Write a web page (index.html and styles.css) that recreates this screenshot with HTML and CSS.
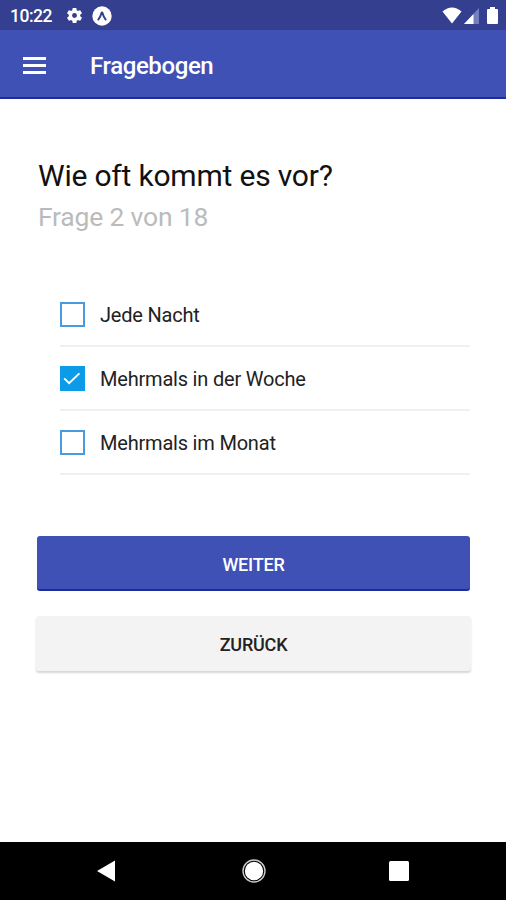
FILE: index.html
```html
<!DOCTYPE html>
<html lang="de">
<head>
    <meta charset="UTF-8">
    <meta name="viewport" content="width=device-width, initial-scale=1.0">
    <title>Fragebogen</title>
    <link rel="stylesheet" href="styles.css">
</head>
<body>
    <div class="status-bar">
        <span class="clock">10:22</span>
        <svg class="gear" width="19" height="19" viewBox="0 0 24 24" fill="#fff"><path d="M19.14 12.94c.04-.3.06-.61.06-.94s-.02-.64-.07-.94l2.03-1.58a.5.5 0 0 0 .12-.61l-1.92-3.32a.5.5 0 0 0-.59-.22l-2.39.96a7 7 0 0 0-1.62-.94l-.36-2.54a.5.5 0 0 0-.48-.41h-3.84a.5.5 0 0 0-.47.41l-.36 2.54c-.59.24-1.13.57-1.62.94l-2.39-.96a.5.5 0 0 0-.59.22L2.74 8.87a.5.5 0 0 0 .12.61l2.03 1.58a6 6 0 0 0 0 1.88l-2.03 1.58a.5.5 0 0 0-.12.61l1.92 3.32c.12.22.37.29.59.22l2.39-.96c.5.38 1.03.7 1.62.94l.36 2.54c.05.24.24.41.48.41h3.84c.24 0 .44-.17.47-.41l.36-2.54a7 7 0 0 0 1.62-.94l2.39.96c.22.08.47 0 .59-.22l1.92-3.32a.5.5 0 0 0-.12-.61zM12 15.1a3.1 3.1 0 1 1 0-6.2 3.1 3.1 0 0 1 0 6.2z"/></svg>
        <svg class="expo" width="20" height="20" viewBox="0 0 20 20"><circle cx="10" cy="10" r="9.7" fill="#fff"/><path d="M6.3 13.6Q8.6 10.6 9.4 7.2Q10 5.8 10.6 7.2Q11.4 10.6 13.7 13.6" fill="none" stroke="#303f8f" stroke-width="1.9" stroke-linecap="round" stroke-linejoin="round"/></svg>
        <div class="status-right">
            <svg width="20" height="17" viewBox="0 0 20 17"><path d="M0.5 4.5Q10-3.5 19.5 4.5L10 16.5z" fill="#fff"/></svg>
            <svg width="15" height="16" viewBox="0 0 15 16"><path d="M15 0v16H0z" fill="#7480bd"/><path d="M9.5 5.9V16H0z" fill="#fff"/></svg>
            <svg class="battery" width="11" height="17" viewBox="0 0 11 17"><path d="M3 0h5v2h2a1 1 0 0 1 1 1v13a1 1 0 0 1-1 1H1a1 1 0 0 1-1-1V3a1 1 0 0 1 1-1h2z" fill="#fff"/></svg>
        </div>
    </div>

    <header class="app-bar">
        <div class="menu-btn">
            <span></span>
            <span></span>
            <span></span>
        </div>
        <h1>Fragebogen</h1>
    </header>

    <main class="content">
        <h2>Wie oft kommt es vor?</h2>
        <p class="progress">Frage 2 von 18</p>

        <ul class="options">
            <li>
                <span class="checkbox"></span>
                <span class="label">Jede Nacht</span>
            </li>
            <li>
                <span class="checkbox checked">
                    <svg width="25" height="25" viewBox="0 0 25 25"><path d="M4.2 12.4L9.1 17.2L19.4 7.4" fill="none" stroke="#fff" stroke-width="2"/></svg>
                </span>
                <span class="label">Mehrmals in der Woche</span>
            </li>
            <li>
                <span class="checkbox"></span>
                <span class="label">Mehrmals im Monat</span>
            </li>
        </ul>

        <button class="btn btn-primary">WEITER</button>
        <button class="btn btn-light">ZURÜCK</button>
    </main>

    <nav class="nav-bar">
        <svg width="18" height="22" viewBox="0 0 18 22"><path d="M0 11L18 0.5v21z" fill="#fff"/></svg>
        <svg class="home" width="24" height="24" viewBox="0 0 24 24"><circle cx="12" cy="12" r="11" fill="none" stroke="#ccc" stroke-width="1.4"/><circle cx="12" cy="12" r="9.2" fill="#fff"/></svg>
        <svg width="20" height="20" viewBox="0 0 20 20"><rect width="20" height="20" rx="1.5" fill="#fff"/></svg>
    </nav>
</body>
</html>
```

FILE: styles.css
```css
* {
    margin: 0;
    padding: 0;
    box-sizing: border-box;
}

body {
    height: 900px;
    display: flex;
    flex-direction: column;
    background: #fff;
    font-family: Roboto, sans-serif;
    overflow: hidden;
}

svg {
    display: block;
    flex: none;
}

/* Status bar */
.status-bar {
    height: 30px;
    display: flex;
    align-items: center;
    padding: 1px 8px 0 10px;
    background: #34408f;
    color: #fff;
}

.clock {
    width: 55px;
    font-size: 17.5px;
    font-weight: 500;
    line-height: 20px;
    letter-spacing: -0.5px;
}

.expo {
    margin-left: 8px;
}

.status-right {
    display: flex;
    align-items: center;
    gap: 2px;
    margin-left: auto;
}

.battery {
    margin-left: 6px;
}

/* App bar */
.app-bar {
    height: 69px;
    display: flex;
    align-items: center;
    padding-left: 23px;
    background: #3f51b5;
    border-bottom: 2px solid #1c2ba0;
    color: #fff;
}

.menu-btn {
    width: 67px;
    display: flex;
    flex-direction: column;
    gap: 4px;
    padding-top: 3px;
}

.menu-btn span {
    width: 23px;
    height: 3px;
    background: #fff;
}

.app-bar h1 {
    font-size: 24px;
    font-weight: 500;
    line-height: 30px;
    letter-spacing: -0.4px;
    padding-top: 4px;
}

/* Questionnaire */
.content {
    flex: 1;
    padding: 57px 36px 0 37px;
}

.content h2 {
    margin-left: 1px;
    font-size: 30px;
    font-weight: 400;
    line-height: 40px;
    letter-spacing: -0.2px;
    color: #111;
}

.progress {
    margin-left: 1px;
    font-size: 26.5px;
    line-height: 41px;
    letter-spacing: -0.2px;
    color: #bbb;
}

.options {
    list-style: none;
    margin: 46px 0 61px 23px;
}

.options li {
    height: 64px;
    display: flex;
    align-items: center;
    gap: 15px;
    border-bottom: 2px solid #f0f0f0;
}

.checkbox {
    width: 25px;
    height: 25px;
    border: 2px solid #4a9ae0;
}

.checkbox.checked {
    border: 0;
    background: #0c9be8;
}

.label {
    padding-top: 2px;
    font-size: 20px;
    line-height: 26px;
    letter-spacing: -0.2px;
    color: #222;
}

.btn {
    display: block;
    width: 433px;
    height: 55px;
    border: 0;
    border-radius: 3px;
    font-family: inherit;
    font-size: 18px;
    font-weight: 500;
    letter-spacing: -0.2px;
}

.btn-primary {
    padding-top: 3px;
    background: #3f51b5;
    border-bottom: 2px solid #1c2ba0;
    color: #fff;
}

.btn-light {
    width: 435px;
    margin: 25px 0 0 -1px;
    padding-top: 2px;
    background: #f3f3f3;
    box-shadow: 0 2px 2px rgba(0, 0, 0, 0.16);
    color: #222;
}

/* Android navigation */
.nav-bar {
    height: 58px;
    display: flex;
    align-items: center;
    justify-content: space-between;
    padding: 0 97px;
    background: #000;
}

.home {
    margin-left: 3px;
}
```
